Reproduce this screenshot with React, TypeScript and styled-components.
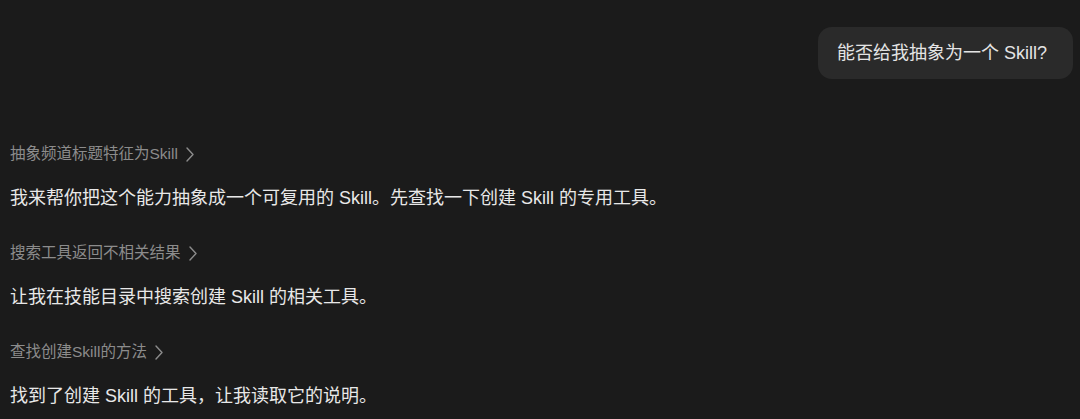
import React from 'react';
import styled, { createGlobalStyle } from 'styled-components';

const GlobalStyle = createGlobalStyle`
  html, body {
    margin: 0;
    padding: 0;
    background: #1b1b1b;
  }
  body {
    font-family: 'Liberation Sans', 'Noto Sans CJK SC', sans-serif;
    -webkit-font-smoothing: antialiased;
  }
`;

// conversation data
const question = '能否给我抽象为一个 Skill?';

const steps = [
  {
    title: '抽象频道标题特征为Skill',
    reply: '我来帮你把这个能力抽象成一个可复用的 Skill。先查找一下创建 Skill 的专用工具。'
  },
  {
    title: '搜索工具返回不相关结果',
    reply: '让我在技能目录中搜索创建 Skill 的相关工具。'
  },
  {
    title: '查找创建Skill的方法',
    reply: '找到了创建 Skill 的工具，让我读取它的说明。'
  }
];

const Page = styled.main`
  display: flex;
  flex-direction: column;
  height: 419px;
  overflow: hidden;
  padding: 27px 7px 0 10px;
  box-sizing: border-box;
`;

const UserRow = styled.div`
  display: flex;
  justify-content: flex-end;
`;

const UserBubble = styled.div`
  background: #2a2a2a;
  color: #e4e4e4;
  font-size: 18px;
  line-height: 24px;
  padding: 14px 26px 14px 19px;
  border-radius: 14px;
`;

const Thread = styled.div`
  display: flex;
  flex-direction: column;
  margin-top: 64px;
`;

const Block = styled.section`
  display: flex;
  flex-direction: column;
  gap: 19px;
  margin-bottom: 30px;
`;

const StepToggle = styled.button`
  display: flex;
  align-items: center;
  gap: 8px;
  align-self: flex-start;
  padding: 0;
  border: none;
  background: none;
  color: #8c8c8c;
  font-family: inherit;
  font-size: 15.5px;
  line-height: 22px;
  height: 22px;
  cursor: pointer;
`;

const Reply = styled.p`
  margin: 0;
  color: #e8e8e8;
  font-size: 18px;
  line-height: 28px;
`;

const Chevron = () => (
  <svg width="8" height="15" viewBox="0 0 8 15" fill="none">
    <polyline
      points="1,1 7,7.5 1,14"
      stroke="#8c8c8c"
      strokeWidth="1.4"
      strokeLinecap="round"
      strokeLinejoin="round"
    />
  </svg>
);

const App: React.FC = () => (
  <>
    <GlobalStyle />
    <Page>
      <UserRow>
        <UserBubble>{question}</UserBubble>
      </UserRow>
      <Thread>
        {steps.map((s, i) => (
          <Block key={i}>
            <StepToggle>
              {s.title}
              <Chevron />
            </StepToggle>
            <Reply>{s.reply}</Reply>
          </Block>
        ))}
      </Thread>
    </Page>
  </>
);

export default App;
